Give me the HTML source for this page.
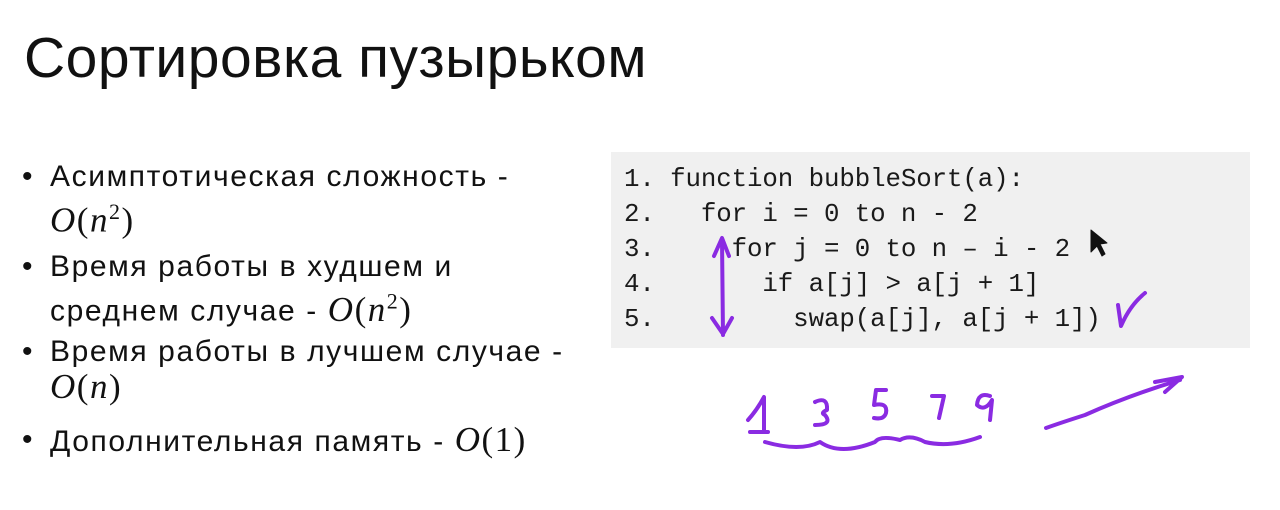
<!DOCTYPE html>
<html><head><meta charset="utf-8"><style>
body{margin:0;width:1280px;height:510px;background:#fff;position:relative;overflow:hidden;font-family:"Liberation Sans",sans-serif;color:#111}
.t{position:absolute;left:24px;top:26px;font-size:57px;line-height:64px;white-space:nowrap;letter-spacing:0.5px}
.l{position:absolute;left:50px;font-size:30px;line-height:32px;white-space:nowrap;letter-spacing:1.6px}
.b{position:absolute;left:22px;font-size:30px;line-height:32px}
.m{font-family:"Liberation Serif",serif;font-size:35px;letter-spacing:1.5px}
.m i{font-style:italic}
.code{position:absolute;left:611px;top:152px;width:639px;height:196px;background:#f0f0f0}
.c{position:absolute;left:624px;font-family:"Liberation Mono",monospace;font-size:25.8px;line-height:35px;white-space:pre;color:#1a1a1a}
</style></head><body>
<div class="t">Сортировка пузырьком</div>
<div class="b" style="top:161px">•</div>
<div class="l" style="top:161px">Асимптотическая сложность -</div>
<div class="l m" style="top:196px"><i>O</i>(<i>n</i><sup style="font-size:22px">2</sup>)</div>
<div class="b" style="top:251px">•</div>
<div class="l" style="top:251px">Время работы в худшем и</div>
<div class="l" style="top:285px">среднем случае - <span class="m"><i>O</i>(<i>n</i><sup style="font-size:22px">2</sup>)</span></div>
<div class="b" style="top:336px">•</div>
<div class="l" style="top:336px">Время работы в лучшем случае -</div>
<div class="l m" style="top:371px"><i>O</i>(<i>n</i>)</div>
<div class="b" style="top:424px">•</div>
<div class="l" style="top:424px">Дополнительная память - <span class="m"><i>O</i>(1)</span></div>
<div class="code"></div>
<div class="c" style="top:162px;letter-spacing:-0.1px">1. function bubbleSort(a):
2.   for i = 0 to n - 2
3.     for j = 0 to n – i - 2
4.       if a[j] &gt; a[j + 1]
5.         swap(a[j], a[j + 1])</div>
<svg width="1280" height="510" style="position:absolute;left:0;top:0" fill="none" stroke="#8a2be2" stroke-width="4" stroke-linecap="round" stroke-linejoin="round">
<path d="M1091 230 L1091 252 L1097 246 L1102 256 L1105 254 L1100 244 L1107 243 Z" fill="#111" stroke="#111" stroke-width="1"/>
<path d="M722 240 L723 335 M714 256 L722 238 L729 256 M712 318 L723 334 L732 318"/>
<path d="M1118 305 L1121 326 Q1130 305 1145 293"/>
<path d="M748 420 Q757 410 764 397 L764 432 M750 432 L768 432"/>
<path d="M815 402 Q828 396 827 410 Q820 413 825 415 Q833 425 815 425"/>
<path d="M886 390 L876 390 L874 405 Q888 402 886 413 Q884 420 874 418"/>
<path d="M932 396 L944 396 L939 418"/>
<path d="M990 396 Q978 392 977 405 Q985 412 992 400 L990 420"/>
<path d="M765 442 Q800 452 820 442 Q840 456 875 442 Q880 435 900 440 Q910 434 925 442 Q950 448 980 437"/>
<path d="M1046 428 Q1060 423 1085 415 Q1130 395 1180 380 M1155 382 L1182 377 L1165 392"/>
</svg>
</body></html>
